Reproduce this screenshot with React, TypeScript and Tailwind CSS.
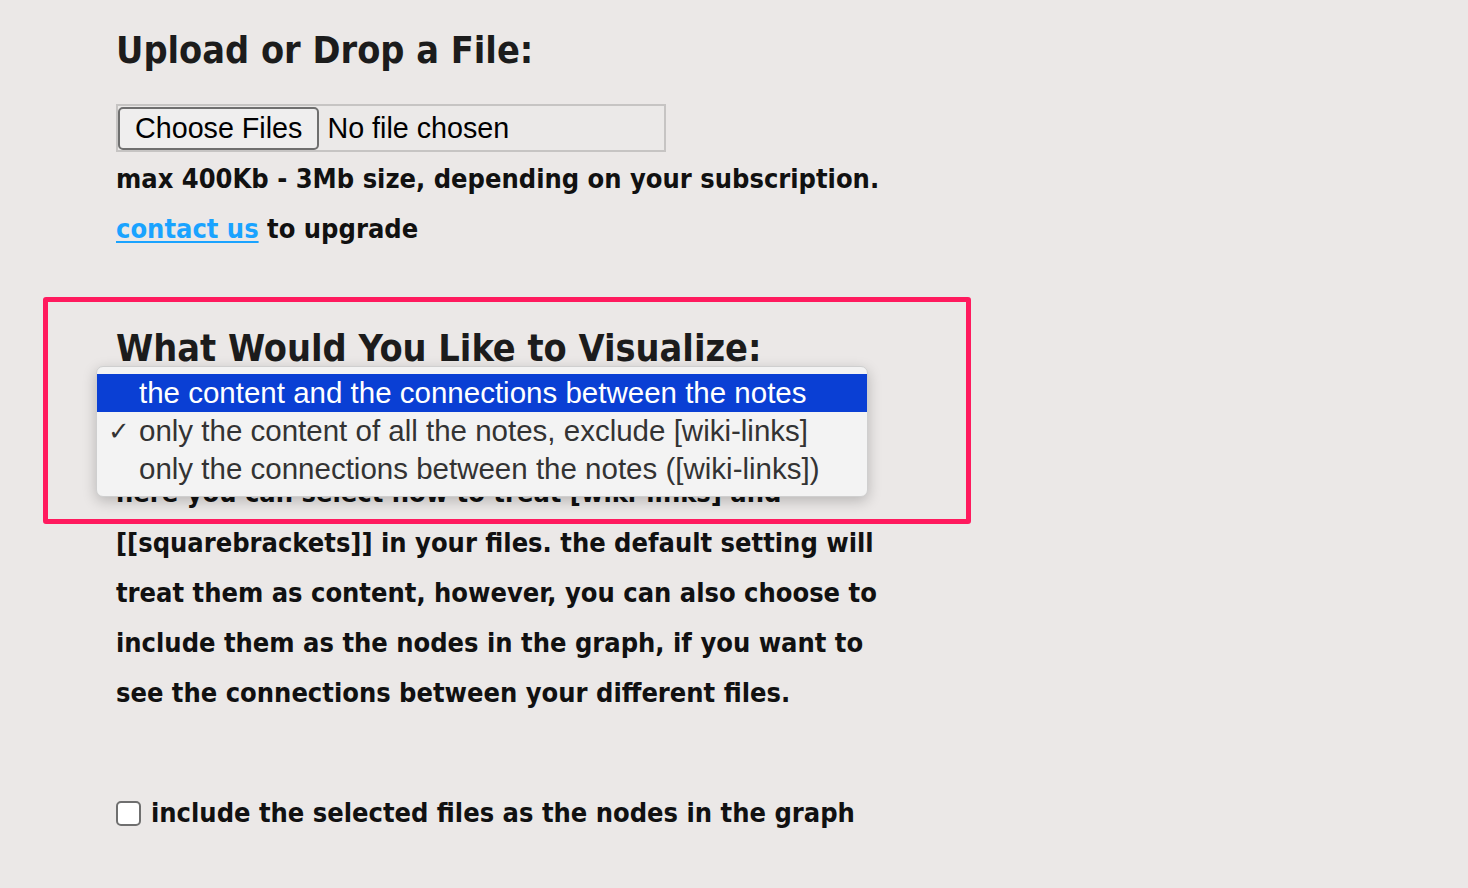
import { useState } from 'react';

const OPTIONS = [
  'the content and the connections between the notes',
  'only the content of all the notes, exclude [wiki-links]',
  'only the connections between the notes ([wiki-links])',
];

const LINES = [
  'here you can select how to treat [wiki-links] and',
  '[[squarebrackets]] in your files. the default setting will',
  'treat them as content, however, you can also choose to',
  'include them as the nodes in the graph, if you want to',
  'see the connections between your different files.',
];

const body = 'font-["DejaVu_Sans_Condensed","DejaVu_Sans",sans-serif] font-bold';

export default function App() {
  const [checked, setChecked] = useState(false);
  const picked = 1;
  const hover = 0;

  return (
    <main className={`relative min-h-[888px] w-full bg-[#ebe8e7] text-[#111] ${body}`}>
      <div className="pl-[116px] pt-[30px]">
        <h2 className="text-[37.5px] leading-[40px] text-[#1c1c1c]">Upload or Drop a File:</h2>

        {/* file input */}
        <div className="mt-[34px] flex h-[48px] w-[550px] items-center border-2 border-[#c6c4c3] bg-[#ebe9e8] font-['Liberation_Sans',Arial,sans-serif] font-normal text-[28.7px] text-black">
          <button className="h-[43px] rounded-[5px] border-2 border-[#6f6f6f] bg-[#efeeee] px-[15px] leading-none">Choose Files</button>
          <span className="ml-[8px] pt-[2px]">No file chosen</span>
        </div>

        <p className="pt-[2px] text-[27px] leading-[50px]">max 400Kb - 3Mb size, depending on your subscription.</p>
        <p className="text-[27px] leading-[50px]">
          <a href="#" className="text-[#1aa3ff] underline underline-offset-[3px]">contact us</a> to upgrade
        </p>

        <h2 className="mt-[74px] text-[37.5px] leading-[40px] text-[#1c1c1c]">What Would You Like to Visualize:</h2>

        <p className="mt-[100px] text-[27px] leading-[50px]">
          {LINES.map(l => (
            <span key={l} className="block">{l}</span>
          ))}
        </p>

        <label className="mt-[70px] flex h-[50px] items-center gap-[10px] text-[27px]">
          <input
            type="checkbox"
            checked={checked}
            onChange={e => setChecked(e.target.checked)}
            className="h-[25px] w-[25px] appearance-none rounded-[5px] border-2 border-[#6f6f6f] bg-white"
          />
          include the selected files as the nodes in the graph
        </label>
      </div>

      {/* highlight frame */}
      <div className="pointer-events-none absolute left-[43px] top-[297px] h-[227px] w-[928px] rounded-[3px] border-[5px] border-[#ff1a5e]" />

      {/* open select menu */}
      <ul className="absolute left-[96px] top-[366px] w-[772px] overflow-hidden rounded-[7px] border border-[#cfcfcf] bg-[#f3f3f3] pt-[7px] pb-[8px] font-['Liberation_Sans',Arial,sans-serif] font-normal text-[29.5px] shadow-[0_4px_14px_rgba(0,0,0,0.22)]">
        {OPTIONS.map((o, i) => (
          <li
            key={o}
            className={`relative flex h-[38px] items-center pl-[42px] ${i === hover ? 'bg-[#0a3fd4] text-white' : 'text-[#333]'}`}
          >
            {i === picked && <span className="absolute left-[11px] text-[26px]">✓</span>}
            {o}
          </li>
        ))}
      </ul>
    </main>
  );
}
